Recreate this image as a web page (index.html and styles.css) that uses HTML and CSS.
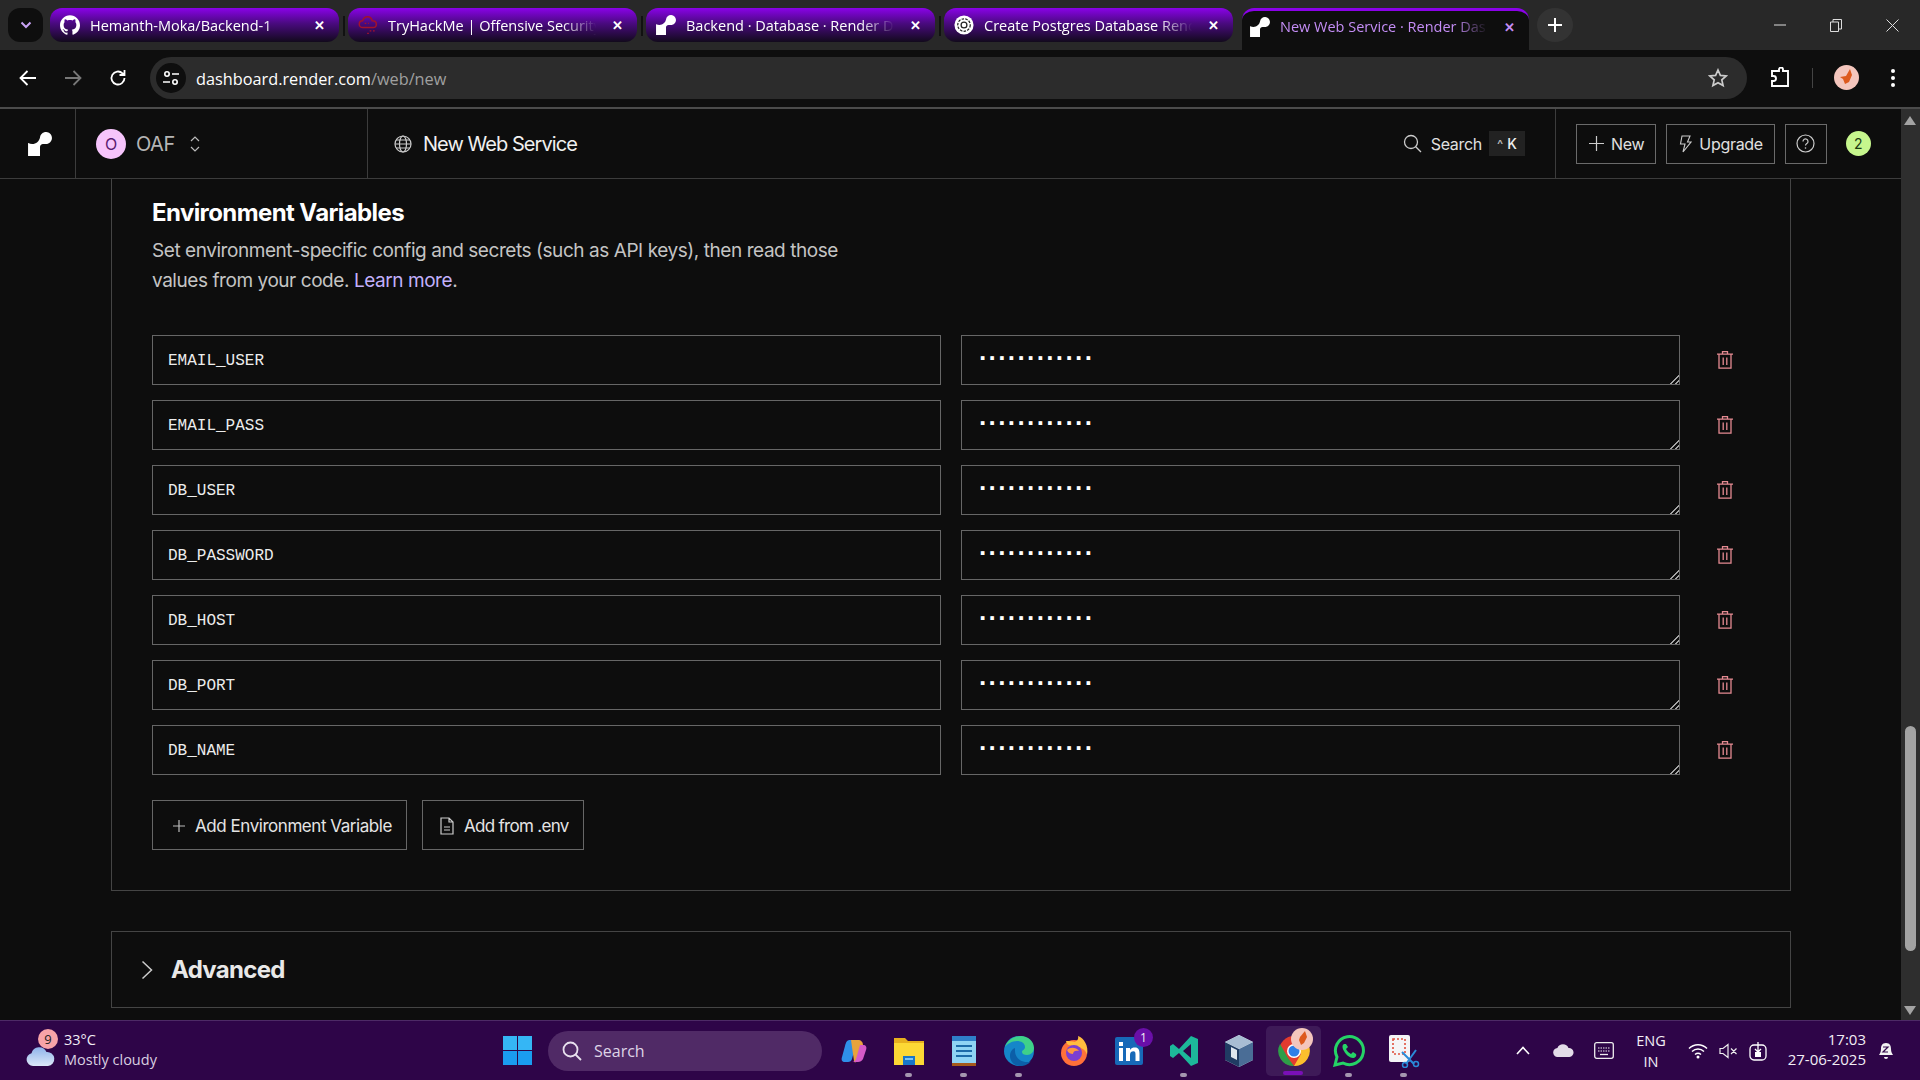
FILE: index.html
```html
<!DOCTYPE html>
<html lang="en">
<head>
    <meta charset="UTF-8">
    <title>New Web Service · Render Dashboard</title>
    <link rel="stylesheet" href="styles.css">
</head>
<body>
    <svg class="sprites" width="0" height="0">
        <symbol id="render" viewBox="0 0 24 24"><path fill="currentColor" d="M18.263.007c-3.121-.147-5.744 2.109-6.192 5.082-.018.138-.045.272-.067.405-.696 3.703-3.936 6.507-7.827 6.507-1.388 0-2.691-.356-3.825-.979a.2024.2024 0 0 0-.302.178V24H12v-8.999c0-1.656 1.338-3 2.987-3h2.988c3.382 0 6.103-2.817 5.97-6.244-.12-3.084-2.61-5.603-5.682-5.75"/></symbol>
        <symbol id="trash" viewBox="0 0 16 18"><path fill="none" stroke="currentColor" stroke-width="1.3" d="M0 3.2h16M5.5 3V.7h5V3M2 3.2v14h12v-14M6.2 6.500v7.500M9.800 6.500v7.500"/></symbol>
    </svg>

    <div class="tabstrip">
        <div class="tab-search"><svg width="12" height="8" viewBox="0 0 12 8"><path d="M1.500 1.500 6 6l4.500-4.500" fill="none" stroke="#c9a3f5" stroke-width="2"/></svg></div>
        <div class="tab">
            <svg class="favicon" viewBox="0 0 24 24"><path fill="#fff" d="M12 .297c-6.630 0-12 5.373-12 12 0 5.303 3.438 9.800 8.205 11.385.6.113.82-.258.82-.577 0-.285-.01-1.040-.015-2.040-3.338.724-4.042-1.610-4.042-1.610C4.422 18.070 3.633 17.700 3.633 17.700c-1.087-.744.084-.729.084-.729 1.205.084 1.838 1.236 1.838 1.236 1.070 1.835 2.809 1.305 3.495.998.108-.776.417-1.305.76-1.605-2.665-.3-5.466-1.332-5.466-5.930 0-1.310.465-2.380 1.235-3.220-.135-.303-.54-1.523.105-3.176 0 0 1.005-.322 3.3 1.230.96-.267 1.980-.399 3-.405 1.020.006 2.040.138 3 .405 2.280-1.552 3.285-1.230 3.285-1.230.645 1.653.24 2.873.12 3.176.765.84 1.230 1.910 1.230 3.220 0 4.610-2.805 5.625-5.475 5.920.42.36.81 1.096.81 2.220 0 1.606-.015 2.896-.015 3.286 0 .315.21.69.825.57C20.565 22.092 24 17.592 24 12.297c0-6.627-5.373-12-12-12"/></svg>
            <span class="tab-title">Hemanth-Moka/Backend-1</span>
            <span class="tab-close">✕</span>
        </div>
        <div class="tab">
            <svg class="favicon" viewBox="0 0 24 24"><path fill="none" stroke="#a3122c" stroke-width="1.800" d="M6 15c-3 0-4.500-2-4.500-4S3 7 5.500 7C6.500 3.500 9 2 11.500 2c3 0 5 2 5.500 5 3 0 5 1.800 5 4s-1.500 4-4 4z"/><path stroke="#a3122c" stroke-width="1.500" stroke-dasharray="2 2" d="M8 10h5M14 19h6M11 22h4"/></svg>
            <span class="tab-title">TryHackMe | Offensive Security</span>
            <span class="tab-close">✕</span>
        </div>
        <div class="tab">
            <svg class="favicon white"><use href="#render"/></svg>
            <span class="tab-title">Backend · Database · Render D</span>
            <span class="tab-close">✕</span>
        </div>
        <div class="tab">
            <svg class="favicon" viewBox="0 0 24 24"><circle cx="12" cy="12" r="11.500" fill="#fff"/><circle cx="12" cy="12" r="7.500" fill="none" stroke="#222" stroke-width="1.500" stroke-dasharray="3 1.500"/><circle cx="12" cy="12" r="3.500" fill="none" stroke="#222" stroke-width="1.500"/></svg>
            <span class="tab-title">Create Postgres Database Rend</span>
            <span class="tab-close">✕</span>
        </div>
        <div class="tab tab-active">
            <svg class="favicon white"><use href="#render"/></svg>
            <span class="tab-title">New Web Service · Render Das</span>
            <span class="tab-close">✕</span>
        </div>
        <div class="tab-new"><svg width="14" height="14" viewBox="0 0 14 14"><path d="M7 0v14M0 7h14" stroke="#fff" stroke-width="2"/></svg></div>
        <div class="window-controls">
            <div class="win-btn"><svg width="12" height="12" viewBox="0 0 12 12"><path d="M0 6h12" stroke="#ddd"/></svg></div>
            <div class="win-btn"><svg width="12" height="13" viewBox="0 0 12 13"><path d="M.5 3h8v9.500h-8zM3 3V.5h8.500V10H9" fill="none" stroke="#ddd"/></svg></div>
            <div class="win-btn"><svg width="13" height="13" viewBox="0 0 13 13"><path d="m.5.5 12 12m0-12-12 12" stroke="#ddd"/></svg></div>
        </div>
    </div>

    <div class="toolbar">
        <div class="nav-btn"><svg width="18" height="16" viewBox="0 0 18 16"><path d="M17 8H2M8.500 1 1.500 8l7 7" fill="none" stroke="#fff" stroke-width="1.800"/></svg></div>
        <div class="nav-btn"><svg width="18" height="16" viewBox="0 0 18 16"><path d="M1 8h15M9.500 1l7 7-7 7" fill="none" stroke="#777" stroke-width="1.800"/></svg></div>
        <div class="nav-btn"><svg width="18" height="18" viewBox="0 0 18 18"><path d="M15.500 9a6.500 6.500 0 1 1-2-4.700L15.500 6M15.500 1v5h-5" fill="none" stroke="#fff" stroke-width="1.800"/></svg></div>
        <div class="omnibox">
            <div class="site-info"><svg width="18" height="18" viewBox="0 0 18 18"><g fill="none" stroke="#fff" stroke-width="1.600"><circle cx="5" cy="5" r="2.200"/><circle cx="13" cy="13" r="2.200"/><path d="M10 5h7M1 13h7"/></g></svg></div>
            <div class="url">dashboard.render.com<span class="url-path">/web/new</span></div>
            <svg class="star" width="20" height="20" viewBox="0 0 20 20"><path d="m10 2 2.400 5.400 5.800.6-4.400 3.900 1.300 5.700L10 14.700l-5.100 2.900 1.300-5.700L1.800 8l5.800-.6z" fill="none" stroke="#ccc" stroke-width="1.700"/></svg>
        </div>
        <div class="toolbar-right">
            <svg class="ext" width="22" height="22" viewBox="0 0 22 22"><path d="M7 4h3V2.500a2 2 0 0 1 4 0V4h5v15H3v-5h1.500a2.500 2.500 0 0 0 0-5H3V4z" fill="none" stroke="#fff" stroke-width="1.900"/></svg>
            <div class="toolbar-divider"></div>
            <svg class="profile" width="25" height="25" viewBox="0 0 25 25"><circle cx="12.500" cy="12.500" r="12.500" fill="#f4c6bd"/><path d="m16 4 2 6-3 7-4 2-2-5-3-2 6-1z" fill="#dd5a1e"/></svg>
            <svg class="kebab" width="4" height="18" viewBox="0 0 4 18"><circle cx="2" cy="2" r="2" fill="#fff"/><circle cx="2" cy="9" r="2" fill="#fff"/><circle cx="2" cy="16" r="2" fill="#fff"/></svg>
        </div>
    </div>

    <div class="viewport">
        <div class="page">
            <header class="app-header">
                <div class="logo-cell"><svg class="logo"><use href="#render"/></svg></div>
                <div class="org-cell">
                    <span class="org-avatar">O</span>
                    <span class="org-name">OAF</span>
                    <svg width="10" height="16" viewBox="0 0 10 16"><path d="m1 5 4-4 4 4M1 11l4 4 4-4" fill="none" stroke="#bbb" stroke-width="1.200"/></svg>
                </div>
                <div class="title-cell">
                    <svg width="18" height="18" viewBox="0 0 18 18"><g fill="none" stroke="#ccc" stroke-width="1.200"><circle cx="9" cy="9" r="8"/><ellipse cx="9" cy="9" rx="3.500" ry="8"/><path d="M1 9h16M2 5h14M2 13h14"/></g></svg>
                    <span class="page-title">New Web Service</span>
                </div>
                <div class="search-cell">
                    <svg width="19" height="19" viewBox="0 0 19 19"><circle cx="8" cy="8" r="6.500" fill="none" stroke="#ccc" stroke-width="1.300"/><path d="m12.700 12.700 5.300 5.300" stroke="#ccc" stroke-width="1.300"/></svg>
                    <span class="search-label">Search</span>
                    <span class="kbd"><span class="kbd-ctrl">^</span> K</span>
                </div>
                <div class="header-actions">
                    <button class="header-btn"><svg width="15" height="15" viewBox="0 0 15 15"><path d="M7.500 0v15M0 7.500h15" stroke="#ccc" stroke-width="1.200"/></svg>New</button>
                    <button class="header-btn"><svg width="13" height="18" viewBox="0 0 13 18"><path d="M3 1h8L8.500 7H12L4 17l2-8H1.500z" fill="none" stroke="#ccc" stroke-width="1.100"/></svg>Upgrade</button>
                    <button class="header-btn help"><svg width="19" height="19" viewBox="0 0 19 19"><circle cx="9.500" cy="9.500" r="8.500" fill="none" stroke="#ccc" stroke-width="1.200"/><path d="M7 7.500a2.500 2.500 0 1 1 3.800 2.100c-.9.600-1.300 1-1.300 2" fill="none" stroke="#ccc" stroke-width="1.200"/><circle cx="9.500" cy="14" r=".8" fill="#ccc"/></svg></button>
                    <span class="notif">2</span>
                </div>
            </header>

            <main class="main">
                <section class="card env-card">
                    <h2>Environment Variables</h2>
                    <p class="env-desc">Set environment-specific config and secrets (such as API keys), then read those<br>values from your code. <a href="#">Learn more</a>.</p>

                    <div class="env-rows">
                        <div class="env-row">
                            <div class="env-key">EMAIL_USER</div>
                            <textarea class="env-value" rows="1">············</textarea>
                            <svg class="trash"><use href="#trash"/></svg>
                        </div>
                        <div class="env-row">
                            <div class="env-key">EMAIL_PASS</div>
                            <textarea class="env-value" rows="1">············</textarea>
                            <svg class="trash"><use href="#trash"/></svg>
                        </div>
                        <div class="env-row">
                            <div class="env-key">DB_USER</div>
                            <textarea class="env-value" rows="1">············</textarea>
                            <svg class="trash"><use href="#trash"/></svg>
                        </div>
                        <div class="env-row">
                            <div class="env-key">DB_PASSWORD</div>
                            <textarea class="env-value" rows="1">············</textarea>
                            <svg class="trash"><use href="#trash"/></svg>
                        </div>
                        <div class="env-row">
                            <div class="env-key">DB_HOST</div>
                            <textarea class="env-value" rows="1">············</textarea>
                            <svg class="trash"><use href="#trash"/></svg>
                        </div>
                        <div class="env-row">
                            <div class="env-key">DB_PORT</div>
                            <textarea class="env-value" rows="1">············</textarea>
                            <svg class="trash"><use href="#trash"/></svg>
                        </div>
                        <div class="env-row">
                            <div class="env-key">DB_NAME</div>
                            <textarea class="env-value" rows="1">············</textarea>
                            <svg class="trash"><use href="#trash"/></svg>
                        </div>
                    </div>

                    <div class="env-actions">
                        <button class="btn"><svg width="12" height="12" viewBox="0 0 12 12"><path d="M6 0v12M0 6h12" stroke="#bbb" stroke-width="1.200"/></svg>Add Environment Variable</button>
                        <button class="btn btn-file"><svg width="14" height="18" viewBox="0 0 14 18"><path d="M1 1h8l4 4v12H1zM9 1v4h4M4 10h6M4 13h6" fill="none" stroke="#ccc" stroke-width="1.200"/></svg>Add from .env</button>
                    </div>
                </section>

                <section class="card advanced-card">
                    <svg width="12" height="20" viewBox="0 0 12 20"><path d="m1.500 1.500 9 8.500-9 8.500" fill="none" stroke="#ccc" stroke-width="1.500"/></svg>
                    <h2>Advanced</h2>
                </section>
            </main>
        </div>

        <div class="scrollbar">
            <div class="arrow-up"></div>
            <div class="thumb"></div>
            <div class="arrow-down"></div>
        </div>
    </div>

    <footer class="taskbar">
        <div class="weather">
            <svg width="30" height="22" viewBox="0 0 30 22"><defs><linearGradient id="cloud" x1="0" y1="0" x2="0" y2="1"><stop offset="0" stop-color="#8fb4ea"/><stop offset="1" stop-color="#dce8f8"/></linearGradient></defs><path d="M8 21a6.500 6.500 0 0 1-1.500-12.800A8 8 0 0 1 21.500 7 7 7 0 0 1 23 21z" fill="url(#cloud)"/></svg>
            <span class="weather-badge">9</span>
            <div class="weather-text">
                <div>33°C</div>
                <div class="weather-sub">Mostly cloudy</div>
            </div>
        </div>
        <div class="start">
            <svg width="29" height="29" viewBox="0 0 29 29"><g fill="#35b6f5"><rect width="14" height="14"/><rect x="15" width="14" height="14"/></g><g fill="#1a9cf0"><rect y="15" width="14" height="14"/><rect x="15" y="15" width="14" height="14"/></g></svg>
        </div>
        <div class="task-search">
            <svg width="20" height="20" viewBox="0 0 20 20"><circle cx="8.500" cy="8.500" r="7" fill="none" stroke="#e8e0ee" stroke-width="1.800"/><path d="m13.500 13.500 5.500 5.500" stroke="#e8e0ee" stroke-width="1.800"/></svg>
            <span>Search</span>
        </div>
        <div class="task-apps">
            <div class="task-app">
                <svg width="28" height="28" viewBox="0 0 28 28"><path d="M10 3h7l-5 19c-.5 2-2 3-4 3H5c-3 0-4-2-3-5l3-11c1-4 2-6 5-6z" fill="#2f8fe8"/><path d="M11 3h7c3 0 5 2 5 5 0 0-1 0-2 0l-5 17c-1 1-2 0-2-1z" fill="#e8a33d"/><path d="M20 8h3c3 0 4 2 3 5l-3 9c-1 2-3 3-5 3h-6c2 0 3-1 4-3z" fill="#d65ac8"/></svg>
            </div>
            <div class="task-app has-dot">
                <svg width="30" height="30" viewBox="0 0 30 30"><path d="M0 2h11l3 3h16v24H0z" fill="#e8b01e"/><path d="M0 7h30v22H0z" fill="#fdd835"/><path d="M9 20h12v9H9z" fill="#1976c8"/><path d="M11 22h8v2h-8z" fill="#7cc4f5"/></svg>
            </div>
            <div class="task-app has-dot">
                <svg width="26" height="32" viewBox="0 0 26 32"><path d="M1 3h24v26H1z" fill="#8fd3f4"/><path d="M1 1h24v5H1z" fill="#2f7fc9"/><path d="M1 28h24v3H1z" fill="#a5591c"/><path d="M5 11h16M5 16h16M5 21h16" stroke="#1c6aa8" stroke-width="2"/></svg>
            </div>
            <div class="task-app has-dot">
                <svg width="32" height="32" viewBox="0 0 32 32"><circle cx="16" cy="16" r="15" fill="#1586c9"/><path d="M2 12C5 3 13 1 18 1c7 0 13 5 13 12 0 4-3 7-7 7-3 0-5-1-5-3 0-2 3-2 3-5 0-4-4-6-8-6-5 0-10 3-12 6z" fill="#3fd08a"/><path d="M12 16c0 6 5 11 12 11 2 0 3 0 4-1-3 4-7 5-11 5-6 0-10-5-10-10 0-4 2-7 5-8z" fill="#0c5fa8"/></svg>
            </div>
            <div class="task-app">
                <svg width="32" height="32" viewBox="0 0 32 32"><circle cx="16" cy="18" r="13" fill="#ff7139"/><path d="M8 6c1 5 4 4 8 5 6 1 12 3 13 9 2-9-3-17-9-19 1 4-2 5-3 6-3-1-6-1-9-1z" fill="#ffbd3f"/><circle cx="16" cy="18" r="8" fill="#7b3fd1"/><path d="M9 15c3-3 9-3 12 1-3-1-6 0-6 3-2 0-5-1-6-4z" fill="#ff9640"/></svg>
            </div>
            <div class="task-app">
                <svg width="28" height="28" viewBox="0 0 28 28"><rect width="28" height="28" rx="2" fill="#1769b8"/><path d="M4 11h4v13H4zM4 5h4v4H4zM11 11h4v2c1-2 3-2.500 5-2.500 3.500 0 4.500 2.500 4.500 6V24h-4v-6.500c0-2-.5-3.200-2-3.200-2 0-3.500 1-3.500 3.500V24h-4z" fill="#fff"/></svg>
                <span class="app-badge">1</span>
            </div>
            <div class="task-app has-dot">
                <svg width="30" height="32" viewBox="0 0 30 32"><path d="M22 1 10 14 4 9 1 11v10l3 2 6-5 12 13 7-3V4zm0 8v14l-8-7z" fill="#1db89a"/></svg>
            </div>
            <div class="task-app">
                <svg width="30" height="34" viewBox="0 0 30 34"><path d="M15 1 29 8v18l-14 7-14-7V8z" fill="#dfe7ef"/><path d="M15 15 29 8v18l-14 7z" fill="#4a6d96"/><path d="M15 15 1 8v18l14 7z" fill="#203c63"/><path d="M15 1 29 8 15 15 1 8z" fill="#a8bdd3"/><path d="m7 13 6 3v10l-6-3z" fill="#dfe7ef"/></svg>
            </div>
            <div class="task-app task-app-active">
                <svg width="32" height="32" viewBox="0 0 32 32"><circle cx="16" cy="16" r="15" fill="#e33b2e"/><path d="M16 9h14a15 15 0 0 1-14 22l7-12z" fill="#fbc02d"/><path d="M2 9l8 14 6 8A15 15 0 0 1 2 9z" fill="#2e9e48"/><circle cx="16" cy="16" r="7" fill="#fff"/><circle cx="16" cy="16" r="5.500" fill="#2f7fe8"/></svg>
                <svg class="chrome-profile" width="22" height="22" viewBox="0 0 22 22"><circle cx="11" cy="11" r="11" fill="#f4c6bd"/><path d="m14 3 2 6-3 6-3 2-2-5 1-3z" fill="#dd5a1e"/></svg>
            </div>
            <div class="task-app has-dot">
                <svg width="32" height="32" viewBox="0 0 32 32"><path d="M2 30l2-8A14 14 0 1 1 10 28z" fill="none" stroke="#25d366" stroke-width="3"/><path d="M11 9c-2 1-2 4 0 7 2 4 6 7 9 7 2 0 4-2 3-4l-3-2-2 2c-2-1-4-3-5-5l2-2-2-3z" fill="#25d366"/></svg>
            </div>
            <div class="task-app has-dot">
                <svg width="32" height="34" viewBox="0 0 32 34"><rect x="1" y="1" width="21" height="27" rx="2" fill="#f4f4f6"/><path d="M5 5h12v15H5z" fill="none" stroke="#e0513f" stroke-width="1.600" stroke-dasharray="2 2"/><path d="m14 18 12 12M28 16 18 30" stroke="#2a8bd8" stroke-width="2"/><circle cx="28" cy="30" r="2.500" fill="none" stroke="#2a8bd8" stroke-width="1.500"/><circle cx="17" cy="31" r="2.500" fill="none" stroke="#2a8bd8" stroke-width="1.500"/></svg>
            </div>
        </div>
        <div class="tray">
            <svg class="tray-chevron" width="14" height="9" viewBox="0 0 14 9"><path d="m1 8 6-6.500L13 8" fill="none" stroke="#fff" stroke-width="1.600"/></svg>
            <svg class="tray-cloud" width="21" height="13" viewBox="0 0 21 13"><path d="M5 13a4.500 4.500 0 0 1-.6-9A6 6 0 0 1 15.500 4 4.500 4.500 0 0 1 16.500 13z" fill="#e3dce8"/></svg>
            <svg class="tray-keyboard" width="20" height="17" viewBox="0 0 20 17"><rect x=".7" y=".7" width="18.600" height="15.600" rx="2" fill="none" stroke="#eee" stroke-width="1.300"/><path d="M4 6h12M4 9h12" stroke="#eee" stroke-dasharray="1.500 1"/><path d="M6 12.500h8" stroke="#eee" stroke-width="1.300"/></svg>
            <div class="tray-lang">ENG<br>IN</div>
            <svg class="tray-wifi" width="20" height="16" viewBox="0 0 20 16"><g fill="none" stroke="#fff" stroke-width="1.500"><path d="M1 5.500c5-5 13-5 18 0M4 8.500c3.500-3.200 8.500-3.200 12 0M7 11.500c1.800-1.500 4.200-1.500 6 0"/></g><circle cx="10" cy="14" r="1.500" fill="#fff"/></svg>
            <svg class="tray-sound" width="19" height="16" viewBox="0 0 19 16"><path d="M1 5.500h3L9 1.500v13l-5-4H1zM12 5.500l5.500 5.500M17.500 5.500 12 11" fill="none" stroke="#eee" stroke-width="1.200"/></svg>
            <svg class="tray-battery" width="18" height="20" viewBox="0 0 18 20"><rect x="1" y="4" width="16" height="15" rx="4" fill="none" stroke="#fff" stroke-width="1.300"/><path d="M9 1v9m-3-2 3 3 3-3" fill="none" stroke="#fff" stroke-width="1.300"/><rect x="6" y="11" width="6" height="5" fill="#fff"/></svg>
            <div class="tray-clock">17:03<br>27-06-2025</div>
            <svg class="tray-bell" width="16" height="20" viewBox="0 0 16 20"><path d="M8 2c4 0 5 3 5 6s1 4 2 6H1c1-2 2-3 2-6s1-6 5-6zM6 16a2 2 0 0 0 4 0" fill="#f2f2f2"/><path d="M5 6h5l-5 5h5" fill="none" stroke="#30064a" stroke-width="1.200"/></svg>
        </div>
    </footer>
</body>
</html>
```

FILE: styles.css
```css
* {
    box-sizing: border-box;
}

html, body {
    height: 100%;
}

body {
    margin: 0;
    overflow: hidden;
    display: flex;
    flex-direction: column;
    background-color: #0d0d0d;
    color: #fff;
    font-family: "Inter", sans-serif;
}

.sprites {
    position: absolute;
}

/* browser tabs */
.tabstrip {
    height: 50px;
    flex-shrink: 0;
    display: flex;
    align-items: flex-start;
    padding: 8px 0 0 8px;
    background-color: #282828;
    font-family: "Open Sans", sans-serif;
    font-size: 14.5px;
}

.tab-search {
    width: 35px;
    height: 34px;
    margin-right: 7px;
    display: flex;
    align-items: center;
    justify-content: center;
    background-color: #0e0e0e;
    border-radius: 12px;
}

.tab {
    width: 289px;
    height: 34px;
    margin-right: 9px;
    padding: 0 13px 0 10px;
    position: relative;
    display: flex;
    align-items: center;
    border-radius: 12px;
    background: linear-gradient(#8a02e8, #4a0a80 45%, #120a1c);
}

.tab:nth-child(-n+4)::after {
    content: "";
    position: absolute;
    right: -6px;
    top: 8px;
    width: 2px;
    height: 20px;
    background-color: #111;
}

.favicon {
    width: 20px;
    height: 20px;
    flex-shrink: 0;
    margin-right: 10px;
}

.favicon.white {
    color: #fff;
}

.tab-title {
    flex: 1;
    overflow: hidden;
    white-space: nowrap;
    -webkit-mask-image: linear-gradient(to right, #000 80%, transparent 96%);
    mask-image: linear-gradient(to right, #000 80%, transparent 96%);
}

.tab-close {
    width: 14px;
    margin-left: 5px;
    font-size: 13px;
    font-weight: 700;
    text-align: center;
}

.tab-active {
    width: 287px;
    height: 42px;
    margin-right: 8px;
    padding: 0 13px 8px 8px;
    border-radius: 12px 12px 0 0;
    border-top: 3px solid #8a02e8;
    background: #0e0e0e;
    color: #c48df5;
}

.tab-new {
    width: 36px;
    height: 34px;
    display: flex;
    align-items: center;
    justify-content: center;
    border-radius: 50%;
    background-color: #333;
}

.window-controls {
    margin-left: auto;
    margin-top: -8px;
    display: flex;
}

.win-btn {
    width: 56px;
    height: 50px;
    display: flex;
    align-items: center;
    justify-content: center;
}

/* address bar */
.toolbar {
    height: 59px;
    flex-shrink: 0;
    display: flex;
    align-items: center;
    padding: 0 0 2px 5px;
    background-color: #0e0e0e;
    border-bottom: 2px solid #4b4b4b;
}

.nav-btn {
    width: 45px;
    display: flex;
    justify-content: center;
}

.omnibox {
    width: 1597px;
    height: 42px;
    margin-left: 10px;
    padding: 0 19px 0 6px;
    display: flex;
    align-items: center;
    border-radius: 21px;
    background-color: #2c2c2c;
    font-family: "Open Sans", sans-serif;
    font-size: 16.3px;
}

.site-info {
    width: 30px;
    height: 30px;
    margin-right: 10px;
    display: flex;
    align-items: center;
    justify-content: center;
    border-radius: 50%;
    background-color: #0e0e0e;
}

.url {
    flex: 1;
    padding-top: 2px;
}

.url-path {
    color: #a0a0a0;
}

.toolbar-right {
    flex: 1;
    display: flex;
    align-items: center;
}

.ext {
    margin-left: 22px;
}

.toolbar-divider {
    width: 1px;
    height: 20px;
    margin-left: 21px;
    background-color: #444;
}

.profile {
    margin-left: 21px;
}

.kebab {
    margin-left: 32px;
}

/* render header + page */
.viewport {
    flex: 1;
    display: flex;
    min-height: 0;
}

.page {
    width: 1901px;
    display: flex;
    flex-direction: column;
}

.app-header {
    height: 70px;
    flex-shrink: 0;
    display: flex;
    align-items: stretch;
    border-bottom: 1px solid #3c3c3c;
}

.logo-cell {
    width: 76px;
    padding-left: 4px;
    display: flex;
    align-items: center;
    justify-content: center;
    border-right: 1px solid #3c3c3c;
}

.logo {
    width: 24px;
    height: 24px;
    color: #fff;
}

.org-cell {
    width: 292px;
    padding-left: 20px;
    display: flex;
    align-items: center;
    border-right: 1px solid #3c3c3c;
}

.org-avatar {
    width: 30px;
    height: 30px;
    display: flex;
    align-items: center;
    justify-content: center;
    border-radius: 50%;
    background-color: #f6c4fb;
    color: #5a1a70;
    font-size: 16px;
}

.org-name {
    margin: 0 15px 0 10px;
    color: #b5b5b5;
    font-size: 20px;
    letter-spacing: -0.5px;
}

.title-cell {
    flex: 1;
    padding-left: 26px;
    display: flex;
    align-items: center;
    gap: 11px;
}

.page-title {
    font-size: 20px;
    letter-spacing: -0.95px;
    color: #f0f0f0;
}

.search-cell {
    display: flex;
    align-items: center;
    margin-right: 30px;
}

.search-label {
    margin-left: 9px;
    font-size: 16px;
    letter-spacing: -0.3px;
    color: #e0e0e0;
}

.kbd {
    height: 25px;
    width: 36px;
    margin-left: 7px;
    display: flex;
    align-items: center;
    justify-content: center;
    gap: 4px;
    background-color: #222;
    font-size: 14px;
    font-weight: 500;
    color: #f0f0f0;
}

.kbd-ctrl {
    color: #bbb;
    font-size: 13px;
}

.header-actions {
    width: 346px;
    padding-left: 20px;
    display: flex;
    align-items: center;
    border-left: 1px solid #3c3c3c;
}

.header-btn {
    height: 40px;
    margin-right: 10px;
    padding: 0 11px 0 12px;
    display: flex;
    align-items: center;
    gap: 7px;
    background: none;
    border: 1px solid #6a6a6a;
    color: #e0e0e0;
    font-family: inherit;
    font-size: 16px;
    letter-spacing: -0.3px;
}

.header-btn.help {
    width: 42px;
    justify-content: center;
    padding: 0;
}

.notif {
    width: 25px;
    height: 25px;
    margin-left: 9px;
    display: flex;
    align-items: center;
    justify-content: center;
    border-radius: 50%;
    background-color: #c6f68d;
    color: #1a3a10;
    font-size: 14px;
}

.main {
    flex: 1;
    min-height: 0;
    overflow: hidden;
    padding-left: 111px;
}

.card {
    width: 1680px;
    border: 1px solid #444;
}

.env-card {
    border-top: none;
    padding: 19px 0 40px 40px;
}

.env-card h2 {
    margin: 0 0 8px;
    font-size: 24px;
    line-height: 30px;
    font-weight: 700;
    letter-spacing: -0.6px;
}

.env-desc {
    margin: 0 0 39px;
    font-size: 19px;
    line-height: 30px;
    letter-spacing: -0.44px;
    color: #c4c4c4;
}

.env-desc a {
    color: #c2b0fb;
    text-decoration: none;
}

.env-rows {
    display: flex;
    flex-direction: column;
    gap: 15px;
}

.env-row {
    display: grid;
    grid-template-columns: 789px 719px 50px;
    gap: 20px;
    align-items: center;
}

.env-key {
    height: 50px;
    padding: 2px 0 0 15px;
    display: flex;
    align-items: center;
    border: 1px solid #666;
    font-family: "Liberation Mono", monospace;
    font-size: 16px;
    color: #ececec;
}

.env-value {
    height: 50px;
    padding: 10px 14px 6px;
    display: block;
    background: transparent;
    border: 1px solid #666;
    border-radius: 0;
    outline: none;
    resize: vertical;
    color-scheme: dark;
    overflow: hidden;
    font-family: "DejaVu Sans Mono", monospace;
    font-size: 22px;
    line-height: 26px;
    letter-spacing: -3.64px;
    font-weight: 700;
    color: #fff;
}

.env-value::-webkit-resizer {
    background: linear-gradient(135deg, transparent 68%, #a5a5a5 68%, #a5a5a5 76%, transparent 76%, transparent 85%, #a5a5a5 85%, #a5a5a5 93%, transparent 93%);
}

.trash {
    width: 16px;
    height: 18px;
    justify-self: center;
    color: #e58a92;
}

.env-actions {
    margin-top: 25px;
    display: flex;
    gap: 15px;
}

.btn {
    height: 50px;
    padding: 2px 14px 0 20px;
    display: flex;
    align-items: center;
    gap: 10px;
    background: none;
    border: 1px solid #666;
    color: #e4e4e4;
    font-family: inherit;
    font-size: 17px;
    letter-spacing: -0.45px;
}

.btn-file {
    padding-left: 17px;
    letter-spacing: -0.7px;
}

.advanced-card {
    height: 77px;
    margin-top: 40px;
    padding-left: 29px;
    display: flex;
    align-items: center;
    gap: 18px;
}

.advanced-card h2 {
    margin: 0;
    font-size: 24px;
    font-weight: 700;
    letter-spacing: -0.7px;
    color: #e8e8e8;
}

/* page scrollbar */
.scrollbar {
    width: 19px;
    position: relative;
    background-color: #2e2e2e;
}

.arrow-up, .arrow-down {
    position: absolute;
    left: 3px;
    width: 0;
    height: 0;
    border-left: 6.5px solid transparent;
    border-right: 6.5px solid transparent;
}

.arrow-up {
    top: 7px;
    border-bottom: 9px solid #a3a3a3;
}

.arrow-down {
    bottom: 5px;
    border-top: 9px solid #a3a3a3;
}

.thumb {
    position: absolute;
    left: 4px;
    top: 617px;
    width: 11px;
    height: 225px;
    border-radius: 6px;
    background-color: #a3a3a3;
}

/* windows taskbar */
.taskbar {
    height: 60px;
    flex-shrink: 0;
    display: flex;
    align-items: center;
    background-color: #2e0548;
    border-top: 1px solid #4d2a66;
    font-family: "Open Sans", sans-serif;
    color: #f2eef5;
}

.weather {
    width: 503px;
    padding-left: 25px;
    position: relative;
    display: flex;
    align-items: center;
    gap: 9px;
}

.weather svg {
    margin-top: 10px;
}

.weather-badge {
    position: absolute;
    left: 38px;
    top: -3px;
    width: 20px;
    height: 20px;
    display: flex;
    align-items: center;
    justify-content: center;
    border-radius: 50%;
    background-color: #f7a3a8;
    color: #222;
    font-size: 13px;
}

.weather-text {
    font-size: 14.5px;
    line-height: 20px;
    margin-top: -2px;
}

.weather-sub {
    color: #d9cfe0;
}

.start {
    width: 45px;
    display: flex;
}

.task-search {
    width: 274px;
    height: 40px;
    padding-left: 14px;
    display: flex;
    align-items: center;
    gap: 12px;
    border-radius: 20px;
    background-color: #502a66;
    font-size: 16px;
    color: #ded4e6;
}

.task-apps {
    margin-left: 4px;
    display: flex;
}

.task-app {
    width: 55px;
    height: 50px;
    position: relative;
    display: flex;
    align-items: center;
    justify-content: center;
}

.has-dot::after {
    content: "";
    position: absolute;
    left: 24px;
    bottom: -1px;
    width: 7px;
    height: 4px;
    border-radius: 2px;
    background-color: #a596b0;
}

.task-app-active {
    background-color: #3e1a58;
    border-radius: 5px;
}

.task-app-active::after {
    content: "";
    position: absolute;
    left: 17px;
    bottom: 1px;
    width: 20px;
    height: 4px;
    border-radius: 2px;
    background-color: #7a0fb8;
}

.chrome-profile {
    position: absolute;
    right: 8px;
    top: 2px;
}

.app-badge {
    position: absolute;
    right: 3px;
    top: 2px;
    width: 19px;
    height: 19px;
    display: flex;
    align-items: center;
    justify-content: center;
    border-radius: 50%;
    background-color: #6a0fa8;
    font-size: 12px;
}

.tray {
    flex: 1;
    display: flex;
    align-items: center;
    padding-left: 85px;
    font-size: 14.5px;
    text-align: center;
}

.tray-cloud {
    margin-left: 23px;
}

.tray-keyboard {
    margin-left: 20px;
}

.tray-lang {
    width: 50px;
    margin-left: 12px;
    line-height: 21px;
}

.tray-wifi {
    margin-left: 12px;
}

.tray-sound {
    margin-left: 11px;
}

.tray-battery {
    margin-left: 11px;
}

.tray-clock {
    width: 96px;
    margin: -3px 0 0 3px;
    font-size: 15px;
    line-height: 20px;
    text-align: right;
}

.tray-bell {
    margin-left: 12px;
}
```
